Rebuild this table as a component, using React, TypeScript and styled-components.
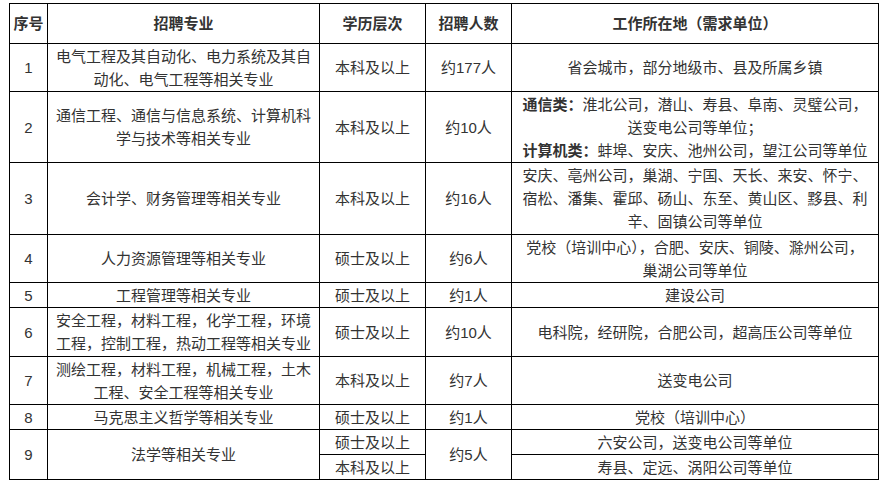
import React from 'react';
import styled, { createGlobalStyle } from 'styled-components';

const GlobalStyle = createGlobalStyle`
  html, body {
    margin: 0;
    padding: 0;
    background: #fff;
  }
  body {
    font-family: "Liberation Sans", "Noto Sans CJK SC", sans-serif;
    color: #333;
  }
`;

const Page = styled.div`
  padding: 3px 8px 0 9px;
`;

const Table = styled.table`
  width: 869px;
  table-layout: fixed;
  border-collapse: collapse;
  font-size: 15px;
  line-height: 23px;
`;

const Row = styled.tr<{ $h: number }>`
  height: ${(p) => p.$h}px;
`;

const HeadCell = styled.th`
  padding: 0;
  border: 1px solid #000;
  font-weight: bold;
  color: #333;
  text-align: center;
  vertical-align: middle;
  white-space: nowrap;
`;

const Cell = styled.td`
  padding: 0 4px;
  border: 1px solid #000;
  text-align: center;
  vertical-align: middle;
  white-space: nowrap;
`;

const Label = styled.strong`
  font-weight: bold;
`;

interface RowData {
  h: number;
  no: string;
  major: React.ReactNode;
  degree: string;
  count: string;
  place: React.ReactNode;
}

const rows: RowData[] = [
  {
    h: 48,
    no: '1',
    major: (
      <>
        电气工程及其自动化、电力系统及其自
        <br />
        动化、电气工程等相关专业
      </>
    ),
    degree: '本科及以上',
    count: '约177人',
    place: '省会城市，部分地级市、县及所属乡镇',
  },
  {
    h: 71,
    no: '2',
    major: (
      <>
        通信工程、通信与信息系统、计算机科
        <br />
        学与技术等相关专业
      </>
    ),
    degree: '本科及以上',
    count: '约10人',
    place: (
      <>
        <Label>通信类：</Label>淮北公司，潜山、寿县、阜南、灵璧公司，
        <br />
        送变电公司等单位；
        <br />
        <Label>计算机类：</Label>蚌埠、安庆、池州公司，望江公司等单位
      </>
    ),
  },
  {
    h: 72,
    no: '3',
    major: '会计学、财务管理等相关专业',
    degree: '本科及以上',
    count: '约16人',
    place: (
      <>
        安庆、亳州公司，巢湖、宁国、天长、来安、怀宁、
        <br />
        宿松、潘集、霍邱、砀山、东至、黄山区、黟县、利
        <br />
        辛、固镇公司等单位
      </>
    ),
  },
  {
    h: 48,
    no: '4',
    major: '人力资源管理等相关专业',
    degree: '硕士及以上',
    count: '约6人',
    place: (
      <>
        党校（培训中心），合肥、安庆、铜陵、滁州公司，
        <br />
        巢湖公司等单位
      </>
    ),
  },
  {
    h: 25,
    no: '5',
    major: '工程管理等相关专业',
    degree: '硕士及以上',
    count: '约1人',
    place: '建设公司',
  },
  {
    h: 49,
    no: '6',
    major: (
      <>
        安全工程，材料工程，化学工程，环境
        <br />
        工程，控制工程，热动工程等相关专业
      </>
    ),
    degree: '硕士及以上',
    count: '约10人',
    place: '电科院，经研院，合肥公司，超高压公司等单位',
  },
  {
    h: 48,
    no: '7',
    major: (
      <>
        测绘工程，材料工程，机械工程，土木
        <br />
        工程、安全工程等相关专业
      </>
    ),
    degree: '本科及以上',
    count: '约7人',
    place: '送变电公司',
  },
  {
    h: 25,
    no: '8',
    major: '马克思主义哲学等相关专业',
    degree: '硕士及以上',
    count: '约1人',
    place: '党校（培训中心）',
  },
];

const App = () => (
  <Page>
    <GlobalStyle />
    <Table>
      <colgroup>
        <col style={{ width: 38 }} />
        <col style={{ width: 272 }} />
        <col style={{ width: 106 }} />
        <col style={{ width: 86 }} />
        <col style={{ width: 367 }} />
      </colgroup>
      <thead>
        <Row $h={40}>
          <HeadCell>序号</HeadCell>
          <HeadCell>招聘专业</HeadCell>
          <HeadCell>学历层次</HeadCell>
          <HeadCell>招聘人数</HeadCell>
          <HeadCell>工作所在地（需求单位）</HeadCell>
        </Row>
      </thead>
      <tbody>
        {rows.map((r) => (
          <Row key={r.no} $h={r.h}>
            <Cell>{r.no}</Cell>
            <Cell>{r.major}</Cell>
            <Cell>{r.degree}</Cell>
            <Cell>{r.count}</Cell>
            <Cell>{r.place}</Cell>
          </Row>
        ))}
        <Row $h={25}>
          <Cell rowSpan={2}>9</Cell>
          <Cell rowSpan={2}>法学等相关专业</Cell>
          <Cell>硕士及以上</Cell>
          <Cell rowSpan={2}>约5人</Cell>
          <Cell>六安公司，送变电公司等单位</Cell>
        </Row>
        <Row $h={25}>
          <Cell>本科及以上</Cell>
          <Cell>寿县、定远、涡阳公司等单位</Cell>
        </Row>
      </tbody>
    </Table>
  </Page>
);

export default App;
